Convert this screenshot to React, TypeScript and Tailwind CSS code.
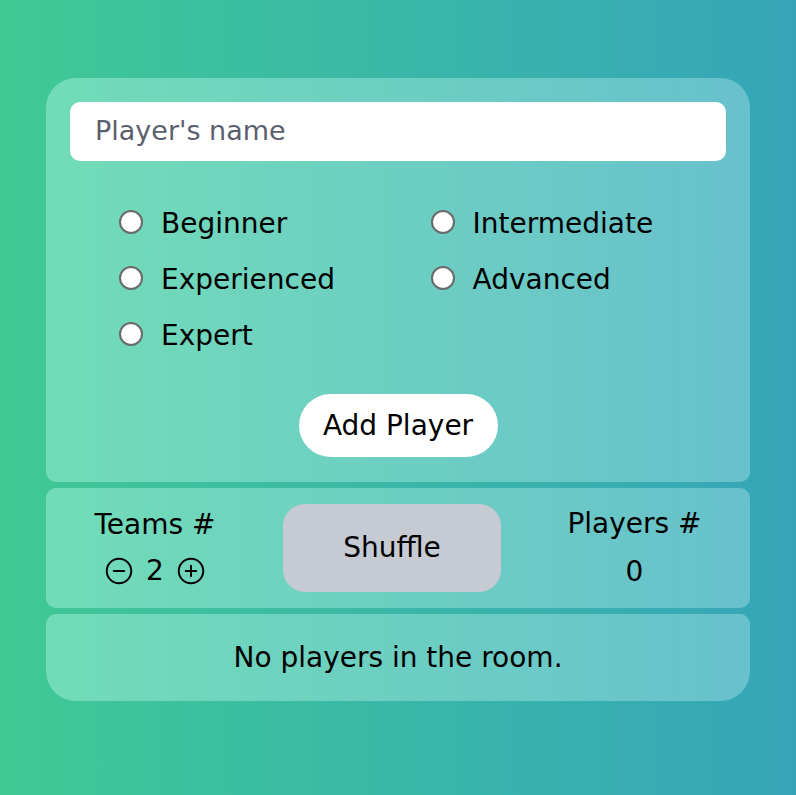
import React from "react";

function Radio({ label }: { label: string }) {
  return (
    <label className="flex items-center gap-[18px] h-[56px]">
      <span className="w-[24px] h-[24px] rounded-full bg-white border-2 border-[#6a6a6a] shrink-0" />
      <span className="text-[28px] text-black leading-none pt-[4px]">{label}</span>
    </label>
  );
}

function CircleIcon({ plus }: { plus?: boolean }) {
  return (
    <svg width="28" height="28" viewBox="0 0 24 24" fill="none" stroke="black" strokeWidth="1.7" strokeLinecap="round">
      <circle cx="12" cy="12" r="10.5" />
      <line x1="7.5" y1="12" x2="16.5" y2="12" />
      {plus && <line x1="12" y1="7.5" x2="12" y2="16.5" />}
    </svg>
  );
}

export default function App() {
  return (
    <div
      className="w-[796px] h-[795px] bg-gradient-to-r from-[#40c994] to-[#36a5b8] pt-[78px] px-[46px]"
      style={{ fontFamily: "'DejaVu Sans', 'Noto Sans', sans-serif" }}
    >
      <div className="flex flex-col gap-[6px]">
        <div className="bg-gradient-to-r from-[#72dcb7] to-[#68c1cc] rounded-t-[30px] rounded-b-[10px] h-[404px] px-[24px] pt-[24px]">
          <div className="h-[59px] bg-white rounded-[10px] flex items-center px-[25px]">
            <span className="text-[27px] text-[#5a5f6e]">Player's name</span>
          </div>
          <div className="grid grid-cols-2 pl-[49px] mt-[33px]">
            <Radio label="Beginner" />
            <div className="pl-[8px]"><Radio label="Intermediate" /></div>
            <Radio label="Experienced" />
            <div className="pl-[8px]"><Radio label="Advanced" /></div>
            <Radio label="Expert" />
          </div>
          <div className="flex justify-center mt-[32px]">
            <button className="h-[63px] w-[199px] bg-white rounded-full text-[28px] text-black">Add Player</button>
          </div>
        </div>
        <div className="bg-gradient-to-r from-[#72dcb7] to-[#68c1cc] rounded-[10px] h-[120px] flex items-center">
          <div className="w-[218px] flex flex-col items-center">
            <span className="text-[28px] text-black leading-none">Teams #</span>
            <div className="flex items-center gap-[13px] mt-[18px]">
              <CircleIcon />
              <span className="text-[28px] leading-none">2</span>
              <CircleIcon plus />
            </div>
          </div>
          <button className="ml-[19px] w-[218px] h-[88px] bg-[#c6cad3] rounded-[22px] text-[28px] text-black">Shuffle</button>
          <div className="flex-1 flex flex-col items-center pl-[18px]">
            <span className="text-[28px] text-black leading-none">Players #</span>
            <span className="text-[28px] leading-none mt-[20px]">0</span>
          </div>
        </div>
        <div className="bg-gradient-to-r from-[#72dcb7] to-[#68c1cc] rounded-t-[10px] rounded-b-[30px] h-[87px] flex items-center justify-center">
          <span className="text-[28px] text-black">No players in the room.</span>
        </div>
      </div>
    </div>
  );
}
